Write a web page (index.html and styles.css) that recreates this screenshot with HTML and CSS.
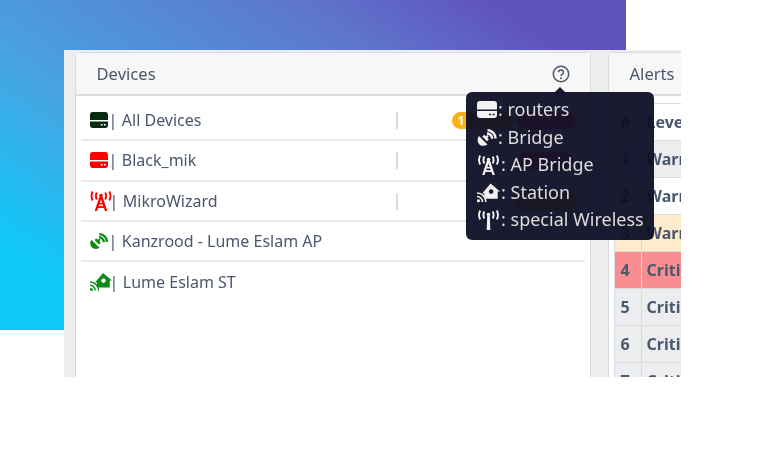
FILE: index.html
```html
<!DOCTYPE html>
<html lang="en">
<head>
	<meta charset="utf-8"/>
	<meta name="viewport" content="width=device-width, initial-scale=1">
	<title>Devices</title>
	<link rel="stylesheet" href="styles.css">
</head>
<body>
	<svg class="defs" width="0" height="0">
		<symbol id="i-router" viewBox="0 0 20 16" preserveAspectRatio="none">
			<path d="M3 0h14a3 3 0 0 1 3 3v5H0V3a3 3 0 0 1 3-3zM0 9.500h20V13a3 3 0 0 1-3 3H3a3 3 0 0 1-3-3zM12 12v1.500h2V12zM15.500 12v1.500h2V12z" fill-rule="evenodd"/>
		</symbol>
		<symbol id="i-bridge" viewBox="0 0 20 18">
			<path d="M1.500 7.500 10.500 16.500C7 18.800 3.200 18 1.300 15.500-.4 13-.3 9.800 1.500 7.500zM5 8 7 6 8.600 7.600 10.200 6.300 11.700 7.800 10.400 9.400 12 11 10 13z"/>
			<path d="M10 4.800a5.500 5.500 0 0 1 5.500 5.500M10.500 1.200a9 9 0 0 1 8.500 8.800" fill="none" stroke="currentColor" stroke-width="2.600"/>
		</symbol>
		<symbol id="i-ap" viewBox="0 0 22 20">
			<path d="M9.500 5.500h3l4.800 14.500h-2.400l-.9-3H8l-.9 3H4.700zM11 8.500l-1.100 3.500h2.200zM9.300 13.500l-.5 1.700h4.400l-.5-1.700z" fill-rule="evenodd"/>
			<circle cx="11" cy="4.500" r="1.800"/>
			<path d="M6.800 1.500Q5 5 6.800 8.500M15.200 1.500Q17 5 15.200 8.500M2.700 .5Q.3 5 2.700 9.500M19.300 .5Q21.700 5 19.300 9.500" fill="none" stroke="currentColor" stroke-width="1.900"/>
		</symbol>
		<symbol id="i-station" viewBox="0 0 22 18">
			<path d="M13 0 22 7.500h-2.200V14.500H7V9.500H5zM13.500 5.500a2.200 2.200 0 1 0 .01 0z" fill-rule="evenodd"/>
			<path d="M0 9a8.500 8.500 0 0 1 8.500 8.500M0 12.300a5.200 5.200 0 0 1 5.200 5.200" fill="none" stroke="currentColor" stroke-width="1.500"/>
			<circle cx="1.400" cy="16.400" r="1.500"/>
		</symbol>
		<symbol id="i-wireless" viewBox="0 0 22 20">
			<path d="M9.700 6h2.600l.5 14h-3.600z"/>
			<circle cx="11" cy="4.500" r="1.800"/>
			<path d="M6.800 1.500Q5 5 6.800 8.500M15.200 1.500Q17 5 15.200 8.500M2.700 .5Q.3 5 2.700 9.500M19.300 .5Q21.700 5 19.300 9.500" fill="none" stroke="currentColor" stroke-width="1.900"/>
		</symbol>
	</svg>

	<div class="backdrop"></div>

	<main class="screen">
		<section class="card devices">
			<header class="card-head">
				<span>Devices</span>
				<svg class="help" viewBox="0 0 18 18" width="18" height="18">
					<circle cx="9" cy="9" r="7.700" fill="none" stroke="currentColor" stroke-width="1.500"/>
					<path d="M6.500 7.200a2.500 2.300 0 1 1 3.800 2c-.9.600-1.300 1-1.300 1.800" fill="none" stroke="currentColor" stroke-width="1.500"/>
					<circle cx="9" cy="13.200" r="1"/>
				</svg>
			</header>
			<ul class="device-list">
				<li class="device">
					<svg class="dev-icon all"><use href="#i-router"/></svg>
					<span class="name"><span class="sep">|</span>All Devices</span>
					<span class="stats">
						<span class="pill warn"><b>1</b></span>
						<span class="pill crit"></span>
					</span>
				</li>
				<li class="device">
					<svg class="dev-icon down"><use href="#i-router"/></svg>
					<span class="name"><span class="sep">|</span>Black_mik</span>
					<span class="stats">
						<span class="pill crit short"></span>
					</span>
				</li>
				<li class="device">
					<svg class="dev-icon down wide"><use href="#i-ap"/></svg>
					<span class="name"><span class="sep">|</span>MikroWizard</span>
					<span class="stats">
						<span class="pill warn long"></span>
					</span>
				</li>
				<li class="device">
					<svg class="dev-icon up"><use href="#i-bridge"/></svg>
					<span class="name"><span class="sep">|</span>Kanzrood - Lume Eslam AP</span>
				</li>
				<li class="device">
					<svg class="dev-icon up wide"><use href="#i-station"/></svg>
					<span class="name"><span class="sep">|</span>Lume Eslam ST</span>
				</li>
			</ul>
		</section>

		<section class="card alerts">
			<header class="card-head"><span>Alerts</span></header>
			<table class="alert-table">
				<tr class="head"><th>#</th><th>Level</th></tr>
				<tr class="odd"><td>1</td><td>Warning</td></tr>
				<tr><td>2</td><td>Warning</td></tr>
				<tr class="warning"><td>3</td><td>Warning</td></tr>
				<tr class="critical"><td>4</td><td>Critical</td></tr>
				<tr class="odd"><td>5</td><td>Critical</td></tr>
				<tr class="odd"><td>6</td><td>Critical</td></tr>
				<tr class="odd"><td>7</td><td>Critical</td></tr>
			</table>
		</section>

		<div class="legend">
			<div class="legend-row"><svg class="leg-icon"><use href="#i-router"/></svg>: routers</div>
			<div class="legend-row"><svg class="leg-icon"><use href="#i-bridge"/></svg>: Bridge</div>
			<div class="legend-row"><svg class="leg-icon wide"><use href="#i-ap"/></svg>: AP Bridge</div>
			<div class="legend-row"><svg class="leg-icon wide"><use href="#i-station"/></svg>: Station</div>
			<div class="legend-row"><svg class="leg-icon wide"><use href="#i-wireless"/></svg>: special Wireless</div>
		</div>
	</main>
</body>
</html>
```

FILE: styles.css
```css
html {
	background: white;
}

body {
	margin: 0;
	width: 768px;
	height: 456px;
	overflow: hidden;
	position: relative;
	font-family: "Noto Sans", sans-serif;
	font-size: 16px;
	color: #4a576d;
}

.defs {
	position: absolute;
}

.backdrop {
	position: absolute;
	left: 0;
	top: 0;
	width: 626px;
	height: 330px;
	background: linear-gradient(35deg, #0fc8f8 11.700%, #48a3e2 36%, #5e75cd 70%, #6054bc 87%);
}

.screen {
	position: absolute;
	left: 64px;
	top: 50px;
	width: 617px;
	height: 327px;
	background: #ebedef;
	overflow: hidden;
	display: flex;
	gap: 17px;
	padding: 2px 0 0 10.500px;
	box-sizing: border-box;
	filter: blur(0.5px);
}

.card {
	background: white;
	border: 1px solid #d8dbe0;
	border-radius: 4px;
	flex: none;
	height: 400px;
	box-sizing: border-box;
}

.devices {
	width: 516px;
}

.alerts {
	width: 200px;
}

.card-head {
	height: 43px;
	box-sizing: border-box;
	background: #f7f7f7;
	border-bottom: 2px solid #d8dbe0;
	display: flex;
	align-items: center;
	justify-content: space-between;
	padding: 0 20px 0 21px;
	font-size: 16.600px;
}

.help {
	color: #4a576d;
	fill: #4a576d;
}

.device-list {
	list-style: none;
	margin: 0;
	padding: 5px 5px 0;
}

.device {
	height: 40.300px;
	border-bottom: 2px solid #e6e8eb;
	display: flex;
	align-items: center;
	padding-left: 9px;
	box-sizing: border-box;
	position: relative;
}

.device:last-child {
	border-bottom: 0;
}

.sep {
	margin: 0 4.500px 0 -1px;
}

.dev-icon {
	width: 18px;
	height: 16px;
	margin-right: 2px;
	flex: none;
}

.dev-icon.wide {
	width: 22px;
	height: 20px;
	margin-right: -1px;
}

.dev-icon.all { color: #0a2a12; fill: #0a2a12; }
.dev-icon.down { color: #ff0000; fill: #ff0000; }
.dev-icon.up { color: #0f8a12; fill: #0f8a12; }

.stats {
	position: absolute;
	left: 315px;
	top: 11px;
	height: 17px;
	width: 178px;
	border-left: 2px solid #d8dbe0;
	display: flex;
	justify-content: flex-end;
	gap: 4px;
	font-size: 12px;
}

.pill {
	display: block;
	border-radius: 9px;
	height: 17px;
	line-height: 17px;
	width: 61px;
	padding-left: 6px;
	box-sizing: border-box;
}

.pill.short {
	width: 55px;
	margin-right: 3px;
}

.pill.long {
	width: 63px;
}

.pill b {
	color: white;
}

.warn { background: #f9b115; }
.crit { background: #e55353; width: 59px; }

.alert-table {
	border-collapse: collapse;
	margin: 7px 0 0 5px;
	width: 190px;
	font-weight: 700;
}

.alert-table th, .alert-table td {
	height: 37px;
	padding: 0 0 0 5px;
	border: 1px solid #d8dbe0;
	text-align: left;
	box-sizing: border-box;
}

.alert-table td:first-child, .alert-table th:first-child {
	width: 27px;
	padding-left: 6px;
}

.alert-table .odd td { background: #ebedef; }
.alert-table .warning td { background: #fdeccc; }
.alert-table .critical td { background: #f88e90; }

.legend {
	position: absolute;
	left: 402px;
	top: 42px;
	width: 188px;
	height: 148px;
	box-sizing: border-box;
	padding: 4px 0 0 11px;
	background: rgba(14, 15, 38, 0.95);
	border-radius: 6px;
	color: #dcdcdc;
	font-size: 18px;
}

.legend::before {
	content: "";
	position: absolute;
	left: 88px;
	top: -5px;
	border: 6px solid transparent;
	border-top: 0;
	border-bottom-color: rgba(14, 15, 38, 0.95);
}

.legend-row {
	height: 27.600px;
	line-height: 27.600px;
	white-space: nowrap;
	display: flex;
	align-items: center;
	gap: 1px;
}

.leg-icon {
	width: 20px;
	height: 17px;
	color: #f2f2f2;
	fill: #f2f2f2;
	flex: none;
}

.leg-icon.wide {
	width: 23px;
	height: 20px;
}
```
